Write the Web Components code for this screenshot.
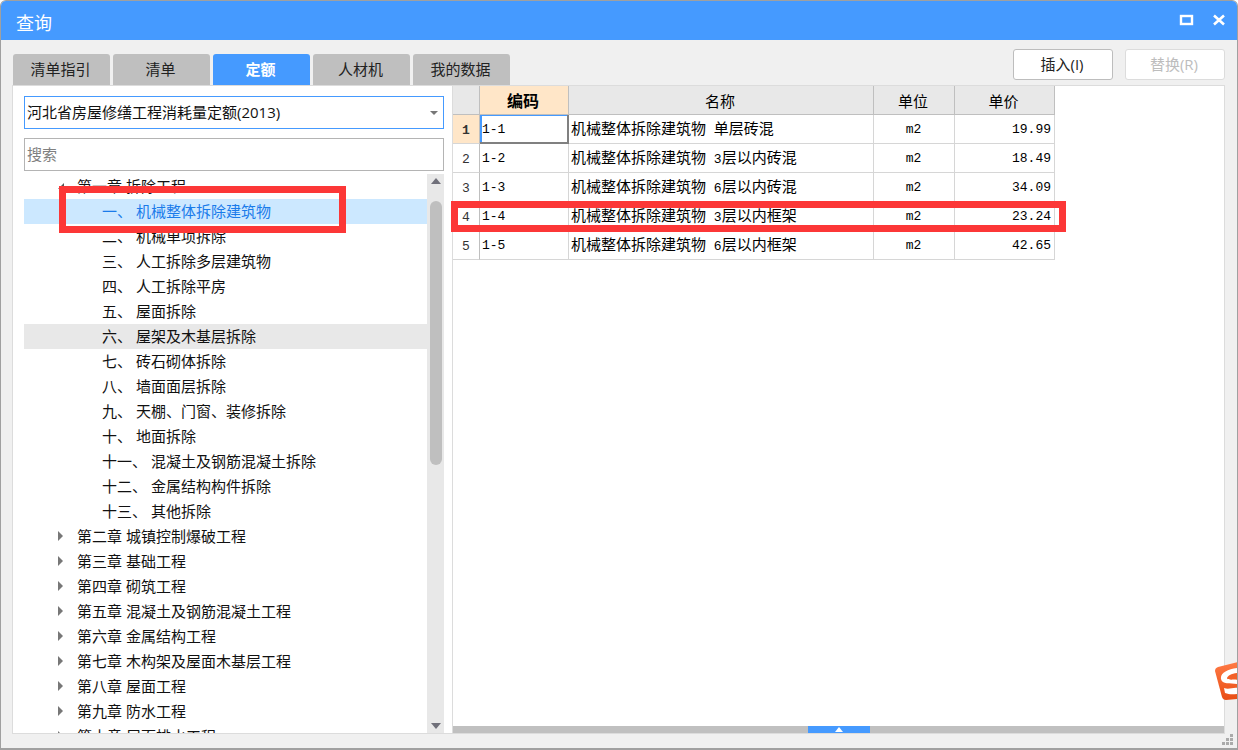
<!DOCTYPE html>
<html lang="zh-CN">
<head>
<meta charset="utf-8">
<title>查询</title>
<style>
  html, body { margin: 0; height: 100%; background: #fff; }
  body { font: 15px/24px "Open Sans", "Noto Sans CJK SC", sans-serif; color: #111; overflow: hidden; }
</style>
</head>
<body>
<query-window caption="查询">
  <tab-strip slot="tabs" selected="定额" items="清单指引,清单,定额,人材机,我的数据"></tab-strip>
  <push-button slot="actions">插入(I)</push-button>
  <push-button slot="actions" disabled>替换(R)</push-button>
  <quota-picker slot="side"></quota-picker>
  <chapter-tree slot="side"></chapter-tree>
  <quota-table slot="main"></quota-table>
</query-window>

<script>
const define = (name, html, setup) => customElements.define(name, class extends HTMLElement {
  connectedCallback() {
    if (this.shadowRoot) return;
    const root = this.attachShadow({ mode: 'open' });
    root.innerHTML = '<style>*{box-sizing:border-box}</style>' + html;
    if (setup) setup(this, root);
  }
});

define('query-window', `
<style>
  :host { display: flex; flex-direction: column; box-sizing: border-box; height: 100vh; position: relative;
    background: #f0f0f0; border: 1px solid #a0a0a0; border-bottom-width: 2px; border-radius: 6px 6px 0 0; overflow: hidden; }
  header { flex: none; display: flex; align-items: center; height: 39px; padding: 4px 10px 0 15px; background: #459aff; color: #fff; }
  h1 { flex: 1; margin: 0; font-size: 18px; line-height: 24px; font-weight: 400; }
  .ctl { display: flex; gap: 16px; margin-top: -6px; }
  .ctl button { display: block; border: 0; padding: 0; width: 16px; height: 16px; background: none; }
  svg { display: block; }
  .bar { flex: none; display: flex; align-items: flex-end; justify-content: space-between; height: 45px; padding: 0 12px; }
  .actions { display: flex; gap: 12px; align-self: center; margin-top: 4px; }
  .panel { flex: 1; min-height: 0; display: flex; margin: 0 12px 14px 11px; border: 1px solid #dcdcdc; background: #fff; }
  aside { flex: none; width: 440px; display: flex; flex-direction: column; padding: 10px 8px 0 11px; border-right: 1px solid #dcdcdc; }
  main { flex: 1; min-width: 0; display: flex; flex-direction: column; }
  .grid { flex: 1; min-height: 0; }
  .split { flex: none; display: flex; justify-content: center; height: 7px; background: #c0c0c0; }
  .split button { border: 0; padding: 1px 0 0; width: 62px; background: #459aff; display: flex; justify-content: center; }
  .grip { position: absolute; right: 4px; bottom: 3px; }
  .ime { position: absolute; right: -1px; bottom: 48px; }
</style>
<header>
  <h1></h1>
  <div class="ctl">
    <button aria-label="最大化"><svg width="16" height="16"><rect x="2" y="4" width="11" height="8" fill="none" stroke="#fff" stroke-width="2.4"/></svg></button>
    <button aria-label="关闭"><svg width="16" height="16"><path d="M3 3.5 13 12.5M13 3.5 3 12.5" stroke="#fff" stroke-width="2.6"/></svg></button>
  </div>
</header>
<div class="bar"><slot name="tabs"></slot><div class="actions"><slot name="actions"></slot></div></div>
<div class="panel">
  <aside><slot name="side"></slot></aside>
  <main>
    <div class="grid"><slot name="main"></slot></div>
    <div class="split"><button aria-label="展开"><svg width="8" height="5"><path d="M0 5 4 0 8 5Z" fill="#fff"/></svg></button></div>
  </main>
</div>
<svg class="grip" width="11" height="11" fill="#aaa"><path d="M8 0h3v3h-3zM4 4h3v3h-3zM8 4h3v3h-3zM0 8h3v3h-3zM4 8h3v3h-3zM8 8h3v3h-3z"/></svg>
<svg class="ime" width="23" height="38" viewBox="0 0 23 38">
  <defs><linearGradient id="o" x2="0" y2="1"><stop stop-color="#ff7a45"/><stop offset="1" stop-color="#e94d14"/></linearGradient></defs>
  <path d="M0 9Q0 6 3 5L23 0V37L11 38Q8 38 7 35Z" fill="url(#o)"/>
  <path d="M23 6C13 7 5 11 6 17C7 23 16 21 23 22V26C18 25 14 28 9 26L10 31C15 33 19 32 23 32V36" fill="#fff"/>
  <path d="M23 11C17 11 12 14 12 16.500C13 18.500 19 17 23 18Z" fill="#f36029"/>
</svg>`,
(host, root) => { root.querySelector('h1').textContent = host.getAttribute('caption'); });

define('tab-strip', `
<style>
  :host { display: flex; gap: 3px; }
  button { width: 97px; height: 31px; padding: 0 2px 2px 0; border: 0; border-radius: 3px 3px 0 0; background: #bfbfbf; color: #222; font: inherit; }
  button[aria-selected=true] { background: #459aff; color: #fff; font-weight: 700; }
</style>`,
(host, root) => {
  host.setAttribute('role', 'tablist');
  for (const text of host.getAttribute('items').split(',')) {
    const b = document.createElement('button');
    b.setAttribute('role', 'tab');
    b.setAttribute('aria-selected', text === host.getAttribute('selected'));
    b.textContent = text;
    root.append(b);
  }
});

define('push-button', `
<style>
  :host { display: block; }
  button { display: block; width: 100px; height: 31px; padding: 0 2px 2px 0; border: 1px solid #bdbdbd; border-radius: 3px; background: #fff; color: #222; font: inherit; }
  button:disabled { border-color: #dcdcdc; color: #bdbdbd; }
</style>
<button><slot></slot></button>`,
(host, root) => { root.querySelector('button').disabled = host.hasAttribute('disabled'); });

define('quota-picker', `
<style>
  :host { display: grid; gap: 9px; flex: none; }
  .combo { display: grid; align-items: center; }
  .combo > * { grid-area: 1 / 1; }
  select, input { width: 100%; height: 33px; margin: 0; padding: 0 2px 2px; border: 1px solid #b4b4b4; border-radius: 0; background: #fff; color: #111; font: inherit; appearance: none; outline: 0; }
  select { border-color: #459aff; }
  input::placeholder { color: #808080; opacity: 1; }
  svg { justify-self: end; margin-right: 6px; pointer-events: none; }
</style>
<div class="combo">
  <select aria-label="定额库"><option>河北省房屋修缮工程消耗量定额(2013)</option></select>
  <svg width="8" height="4"><path d="M0 0H8L4 4Z" fill="#777"/></svg>
</div>
<input type="text" placeholder="搜索" aria-label="搜索">`);

define('chapter-tree', `
<style>
  :host { display: flex; flex: 1; min-height: 0; margin-top: 3px; overflow: hidden; }
  ul { list-style: none; margin: 0; padding: 0; }
  .tree { flex: 1; min-width: 0; overflow: hidden; }
  .row { display: flex; align-items: center; height: 25px; padding: 0 0 2px 34px; white-space: nowrap; }
  .row svg { flex: none; width: 6px; margin-right: 13px; }
  li li .row { padding-left: 78px; }
  .selected { position: relative; background: #cce8ff; color: #1a7bea; }
  .hover { background: #e8e8e8; }
  .mark { position: absolute; z-index: 1; left: 35px; top: -13px; width: 287px; height: 47px; border: 7px solid #fc3737; }
  .scroll { flex: none; width: 17px; display: flex; flex-direction: column; align-items: center; padding: 4px 0; background: #e8e8e8; }
  .thumb { width: 12px; height: 48%; margin: 17px 0 auto; border-radius: 6px; background: #bfbfbf; }
</style>
<ul class="tree" role="tree" aria-label="章节"></ul>
<div class="scroll" aria-hidden="true">
  <svg width="10" height="6"><path d="M0 6 5 0 10 6Z" fill="#70707a"/></svg>
  <div class="thumb"></div>
  <svg width="10" height="6"><path d="M0 0H10L5 6Z" fill="#70707a"/></svg>
</div>`,
(host, root) => {
  const children = ['一、 机械整体拆除建筑物', '二、 机械单项拆除', '三、 人工拆除多层建筑物', '四、 人工拆除平房', '五、 屋面拆除',
    '六、 屋架及木基层拆除', '七、 砖石砌体拆除', '八、 墙面面层拆除', '九、 天棚、门窗、装修拆除', '十、 地面拆除',
    '十一、 混凝土及钢筋混凝土拆除', '十二、 金属结构构件拆除', '十三、 其他拆除'];
  const chapters = ['第一章 拆除工程', '第二章 城镇控制爆破工程', '第三章 基础工程', '第四章 砌筑工程', '第五章 混凝土及钢筋混凝土工程',
    '第六章 金属结构工程', '第七章 木构架及屋面木基层工程', '第八章 屋面工程', '第九章 防水工程', '第十章 屋面排水工程'];
  const open = '<svg height="8"><path d="M6 1V7H0Z" fill="#555"/></svg>';
  const closed = '<svg height="10"><path d="M0 0 5 5 0 10Z" fill="#777"/></svg>';
  const leaf = (t, i) => `<li role="treeitem"><div class="row ${i === 0 ? 'selected' : i === 5 ? 'hover' : ''}">${t}${i === 0 ? '<span class="mark"></span>' : ''}</div></li>`;
  root.querySelector('.tree').innerHTML = chapters.map((t, i) =>
    `<li role="treeitem" aria-expanded="${i === 0}"><div class="row">${i ? closed : open}${t}</div>${i ? '' : `<ul role="group">${children.map(leaf).join('')}</ul>`}</li>`).join('');
});

define('quota-table', `
<style>
  :host { display: block; }
  table { width: 602px; table-layout: fixed; border-collapse: separate; border-spacing: 0; color: #000; }
  th, td { height: 29px; padding: 0 3px 0 2px; border: solid #d6d6d6; border-width: 0 1px 1px 0; font-weight: 400; white-space: nowrap; line-height: 20px; }
  thead th { background: #e8e8e8; border-color: #bfbfbf; padding: 2px 2px 0 0; }
  thead .on { background: #ffe6c8; font-weight: 700; font-size: 16px; }
  tbody td.n { padding-top: 2px; }
  tbody th { padding: 4px 0 0; border-right-color: #bfbfbf; color: #333; }
  tbody th.on { background: #ffe6c8; font-weight: 700; }
  .n { font-family: "Liberation Mono", monospace; font-size: 13px; }
  .c { text-align: center; }
  .r { text-align: right; }
  td.focus { border-color: #808080; border-width: 0 2px 2px 0; box-shadow: inset 0 1px #459aff, inset 2px 0 #459aff; }
  .marked { position: relative; }
  .mark { position: absolute; left: -2px; top: -1px; width: 615px; height: 31px; border: 7px solid #fc3737; }
</style>
<table>
  <colgroup><col style="width:27px"><col style="width:89px"><col style="width:305px"><col style="width:81px"><col style="width:100px"></colgroup>
  <thead><tr><th aria-label="序号"></th><th class="on">编码</th><th>名称</th><th>单位</th><th>单价</th></tr></thead>
  <tbody></tbody>
</table>`,
(host, root) => {
  const rows = [['1-1', '单层砖混', '19.99'], ['1-2', '3层以内砖混', '18.49'], ['1-3', '6层以内砖混', '34.09'],
    ['1-4', '3层以内框架', '23.24'], ['1-5', '6层以内框架', '42.65']];
  const name = s => ('机械整体拆除建筑物 ' + s).replace(/ \d?/, m => `<span class="n">${m}</span>`);
  root.querySelector('tbody').innerHTML = rows.map(([code, kind, price], i) =>
    `<tr class="${i === 3 ? 'marked' : ''}"><th class="n ${i ? '' : 'on'}">${i + 1}</th><td class="n ${i ? '' : 'focus'}">${code}</td><td>${name(kind)}</td><td class="n c">m2</td><td class="n r">${price}${i === 3 ? '<span class="mark"></span>' : ''}</td></tr>`).join('');
});
</script>
</body>
</html>
